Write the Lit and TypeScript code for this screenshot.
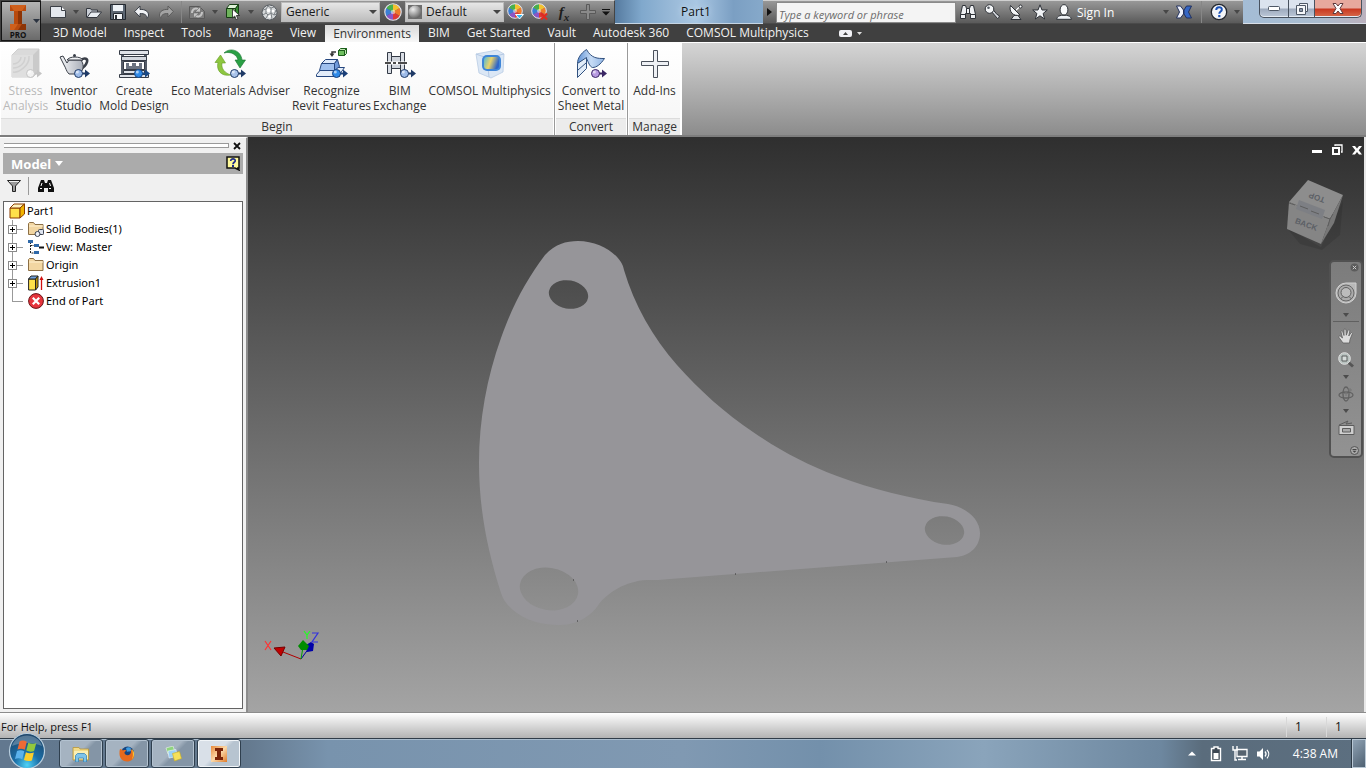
import { LitElement, html, css, TemplateResult } from "lit";
import { customElement } from "lit/decorators.js";
import { classMap } from "lit/directives/class-map.js";

type Icon = TemplateResult;

/* ---------- quick access icons (16 x 16) ---------- */
const newIcon = html`<svg width="16" height="16" viewBox="0 0 16 16"><path d="M.5 2.500h11l4 4v7h-15z" fill="#e4e8ee" stroke="#3b3f46"/><path d="M11.500 2.500v4h4" fill="#fff" stroke="#3b3f46"/></svg>`;
const openIcon = html`<svg width="16" height="16" viewBox="0 0 16 16"><path d="M.5 13.500v-9h4l1 1.500h6v3" fill="#c9ced6" stroke="#33373e"/><path d="M1 13.500l4-5.500h10.500l-4.500 5.500z" fill="#e9edf2" stroke="#33373e"/></svg>`;
const saveIcon = html`<svg width="16" height="16" viewBox="0 0 16 16"><path d="M.5.500h15v15h-15z" fill="#5c6672" stroke="#23282f"/><path d="M3 1h10v6H3z" fill="#eef2f6"/><path d="M3.500 9.500h9v6h-9z" fill="#f4f6f8" stroke="#23282f"/><path d="M5 11h2v4H5z" fill="#2a2f36"/></svg>`;
const undoIcon = html`<svg width="16" height="16" viewBox="0 0 16 16"><path d="M6 2v3.500c5-.5 8.500 2 8.500 5.500 0 1.500-.6 2.700-1.700 3.500.6-3-2-5.200-6.800-4.900V13L.7 7.500z" fill="#f1f3f6" stroke="#3a3f47"/></svg>`;
const redoIcon = html`<svg width="16" height="16" viewBox="0 0 16 16"><path d="M10 2v3.500c-5-.5-8.500 2-8.500 5.500 0 1.500.6 2.700 1.700 3.500-.6-3 2-5.200 6.800-4.900V13l5.300-5.500z" fill="#a3a3a3" stroke="#5c5c5c"/></svg>`;
const updateIcon = html`<svg width="16" height="16" viewBox="0 0 16 16"><path d="M.5 2.500h10l5 5v7H.5z" fill="#7d7d7d" stroke="#5a5a5a"/><path d="M3 9c0-4 4-6 7-3M13 8c0 4-4 6-7 3" fill="none" stroke="#c4c4c4" stroke-width="2"/><path d="M11.500 2.500V8H6zM4.500 14V9H10z" fill="#c4c4c4" stroke="#5a5a5a" stroke-width=".5"/></svg>`;
const pickIcon = html`<svg width="16" height="18" viewBox="0 0 16 18"><path d="M1.500 5.500h9v9h-9z" fill="#6eb35c" stroke="#173e14"/><path d="M1.500 5.500l3-4h9l-3 4z" fill="#dff3d8" stroke="#173e14"/><path d="M10.500 5.500l3-4v9l-3 4z" fill="#338a2e" stroke="#173e14"/><path d="M7.500 6v9l2.200-2 1.500 3.700 1.700-.8-1.500-3.400h3.200z" fill="#fff" stroke="#222" stroke-width=".8"/></svg>`;
const ballIcon = html`<svg width="17" height="17" viewBox="0 0 17 17"><circle cx="8.500" cy="8.500" r="7.500" fill="#d5d8da" stroke="#50555a"/><path d="M2 6l3-1 2-3 3 2 3-1M2 11l3-2 2 2 3-2 3 2 3-1M5 5l0 4M10 4l0 5M5 14l2-3M11 15l-1-6M13 11l2-5" fill="none" stroke="#7d8286" stroke-width="1"/><circle cx="7.500" cy="6.500" r="1.800" fill="#fff"/><circle cx="12" cy="7" r="1.300" fill="#fff"/><circle cx="8.500" cy="12.500" r="1.300" fill="#fff"/></svg>`;

const wheelPaths = html`<svg x="0" y="0" width="16" height="16" viewBox="0 0 16 16"><path d="M8 8V1a7 7 0 0 1 6 3.500z" fill="#f2c230"/><path d="M8 8l6-3.500a7 7 0 0 1 0 7z" fill="#ef7a2a"/><path d="M8 8l6 3.500A7 7 0 0 1 8 15z" fill="#de3a35"/><path d="M8 8v7a7 7 0 0 1-6-3.500z" fill="#8a56c7"/><path d="M8 8l-6 3.500a7 7 0 0 1 0-7z" fill="#3b7fd6"/><path d="M8 8L2 4.500A7 7 0 0 1 8 1z" fill="#49b04c"/><circle cx="8" cy="8" r="7.300" fill="none" stroke="#e6e6ee"/><circle cx="8" cy="8" r="2" fill="#fff" opacity=".5"/></svg>`;
const wheelIcon = html`<svg width="18" height="18" viewBox="0 0 16 16">${wheelPaths}</svg>`;
const wheelAdjustIcon = html`<svg width="18" height="18" viewBox="0 0 18 18">${wheelPaths}<path d="M8.500 11.500h8l-4 4.500z" fill="#38b6ee" stroke="#fff"/></svg>`;
const wheelClearIcon = html`<svg width="18" height="18" viewBox="0 0 18 18">${wheelPaths}<path d="M10 10.500l6 6M16 10.500l-6 6" stroke="#e02a20" stroke-width="2.200"/></svg>`;
const plusDim = html`<svg width="16" height="16" viewBox="0 0 16 16"><path d="M6.500.5h3v6h6v3h-6v6h-3v-6h-6v-3h6z" fill="#8a8a8a" stroke="#5a5a5a"/></svg>`;
const sphereIcon = html`<svg width="14" height="14" viewBox="0 0 14 14"><rect width="14" height="14" fill="#6e6e6e"/><circle cx="7" cy="7" r="6.500" fill="url(#sphere)"/></svg>`;
const caret = html`<svg width="6" height="4" viewBox="0 0 6 4"><path d="M0 0h6L3 4z" fill="currentColor"/></svg>`;
const comboCaret = html`<svg width="8" height="4" viewBox="0 0 8 4"><path d="M0 0h8L4 4z" fill="#444"/></svg>`;
const moreIcon = html`<svg width="8" height="8" viewBox="0 0 8 8"><path d="M0 1.500h8" stroke="#111"/><path d="M0 3.500h8L4 7.500z" fill="#111"/></svg>`;

/* ---------- info center icons ---------- */
const binocularsIcon = html`<svg width="16" height="16" viewBox="0 0 16 16"><path d="M2.500 1.500h3l1 3h3l1-3h3l2 9v4h-5v-5h-5v5h-5v-4z" fill="#eef0f3" stroke="#2e3238"/><path d="M6.500 4.500v5M9.500 4.500v5M.5 10.500h5M10.500 10.500h5" stroke="#2e3238"/></svg>`;
const keyIcon = html`<svg width="16" height="16" viewBox="0 0 16 16"><path d="M7 7l6.500 7.500 2-1.500-1-2-1.500-.5L9 5.500z" fill="#d9dce1" stroke="#2e3238"/><circle cx="5.500" cy="5" r="4.300" fill="#f3f5f7" stroke="#2e3238"/><circle cx="4.500" cy="3.800" r="1.300" fill="#555b63"/></svg>`;
const dishIcon = html`<svg width="16" height="16" viewBox="0 0 16 16"><path d="M7 6l6-5M3 15.500h10l-3-4H6z" fill="#dfe2e6" stroke="#2e3238"/><path d="M2.500 1.500c-2 6 3 11.500 9.500 9.500z" fill="#f3f5f7" stroke="#2e3238"/><path d="M8 6l4.500-4" stroke="#fff" stroke-width="1.500"/><circle cx="12.500" cy="2.500" r="1.500" fill="#fff" stroke="#2e3238"/></svg>`;
const starIcon = html`<svg width="16" height="16" viewBox="0 0 16 16"><path d="M8 .8l2 5.200h5.300l-4.200 3.500 1.500 5.500L8 11.800 3.400 15l1.500-5.500L.7 6H6z" fill="#f1f3f6" stroke="#2e3238"/></svg>`;
const userIcon = html`<svg width="16" height="16" viewBox="0 0 16 16"><path d="M.6 15.300c.3-2.800 2.800-3.600 5-4h4.800c2.200.4 4.700 1.200 5 4z" fill="#eef1f4" stroke="#2e3238"/><ellipse cx="8" cy="5.800" rx="3.900" ry="5.200" fill="#f8f9fa" stroke="#2e3238"/></svg>`;
const exchangeIcon = html`<svg width="16" height="14" viewBox="0 0 16 14"><path d="M.5 1h4l3 4v4l-3 4h-4l3-6z" fill="#eef1fb" stroke="#22305e"/><path d="M15.500 1h-5l-2.500 4v4l2.500 4h5l-3-6z" fill="#3566c4" stroke="#22305e"/></svg>`;
const helpIcon = html`<svg width="18" height="18" viewBox="0 0 18 18"><circle cx="9" cy="9" r="7.700" fill="#f3f5f8" stroke="#23272e" stroke-width="1.300"/><path d="M6.200 7c0-3.800 6-3.600 5.600-.2-.2 1.800-2.500 1.800-2.500 4" fill="none" stroke="#1c53b8" stroke-width="2"/><rect x="8.200" y="12" width="2.200" height="2.200" fill="#1c53b8"/></svg>`;

/* ---------- ribbon icons (32 x 32) ---------- */
const arrowBadge = (ball: string, shaft: string) =>
  html`<svg x="0" y="0" width="32" height="32" viewBox="0 0 32 32"><path d="M23 25.500h4" stroke="${shaft}" stroke-width="2"/><path d="M27 21.500l5 4-5 4z" fill="${shaft}"/><circle cx="20.500" cy="25.500" r="4" fill="${ball}" stroke="${shaft}"/><circle cx="19.300" cy="24" r="1.500" fill="#fff" opacity=".6"/></svg>`;
const stressIcon = html`<svg width="32" height="32" viewBox="0 0 32 32"><path d="M2 7l6-6h21v22l-6 6H2z" fill="#dadada" stroke="#cfcfcf"/><path d="M2 7h21v22H2z" fill="#dfdfdf"/><path d="M23 7l6-6v22l-6 6z" fill="#cacaca"/><path d="M3 24C8 25 20 18 19 8M3 20c7 0 12-5 12-11M3 16c4 0 8-3 8-7" fill="none" stroke="#d0d0d0" stroke-width="1.500"/>${arrowBadge("#f2f2f2", "#c4c4c4")}</svg>`;
const teapotIcon = html`<svg width="32" height="32" viewBox="0 0 32 32"><path d="M23 12c4-3 7-1 6 2s-4 6-7 7" fill="none" stroke="#3a3f48" stroke-width="2.500"/><path d="M2 9l3-1 4 7 2-3h12c4 6 2 11-2 14H11C8 23 8 20 6 17z" fill="url(#silver)" stroke="#3a3f48"/><path d="M9 12c2-4 14-4 16 0z" fill="#f2f3f5" stroke="#3a3f48"/><circle cx="16.500" cy="7.500" r="1.500" fill="#3a3f48"/>${arrowBadge("#9dbbe8", "#1f3a66")}</svg>`;
const moldIcon = html`<svg width="32" height="32" viewBox="0 0 32 32"><path d="M4.500 6v21M27.500 6v21" stroke="#555c68" stroke-width="3"/><path d="M1.500 2.500h29v4h-29z" fill="#dfe2e8" stroke="#363c47"/><path d="M3.500 8.500h25v4h-25z" fill="#d3d7de" stroke="#363c47"/><path d="M5.500 13.500h21v8h-21z" fill="#fff" stroke="#363c47"/><path d="M8 15h3v3h3v-3h4v3h3v-3h3v6H8z" fill="#6a7280"/><path d="M5.500 22.500h21v3h-21zM1.500 26.500h29v3h-29z" fill="#dfe2e8" stroke="#363c47"/>${arrowBadge("#2f8ae8", "#1b4a86")}</svg>`;
const ecoIcon = html`<svg width="32" height="32" viewBox="0 0 32 32"><path d="M10 5C16-1 27 2 28 12h3.500l-5.500 8-5-8h3C23 7 17 3 10 5z" fill="#2aa045" stroke="#17702e" stroke-width=".6"/><path d="M17 27C7 29 2 22 4 14.500H1L6.500 7l5 8H8c-1 6 3 10 9 12z" fill="#8dc63f" stroke="#639b22" stroke-width=".6"/>${arrowBadge("#a9c3ea", "#1f3a66")}</svg>`;
const recognizeIcon = html`<svg width="32" height="32" viewBox="0 0 32 32"><path d="M22.500 2.500h6v5h-6z" fill="#6fbf5f" stroke="#1b5e1a"/><path d="M22.500 2.500l2-2h6l-2 2zM28.500 7.500l2-2v-5l-2 2z" fill="#bfe6b3" stroke="#1b5e1a"/><path d="M20 4h-4v2" fill="none" stroke="#333" stroke-width="1.500"/><path d="M13.500 5.500h5l-2.500 3.500z" fill="#333"/><path d="M.5 26.500l6-7h22l-5 7v2h-23z" fill="#e4edf9" stroke="#26477f"/><path d="M5.500 15.500h13v7h-15z" fill="#9fc0ee" stroke="#26477f"/><path d="M5.500 15.500l4-4h12l-3 4z" fill="#dce9fb" stroke="#26477f"/><path d="M18.500 15.500l3-4 2 7-5 4z" fill="#6f9adb" stroke="#26477f"/>${arrowBadge("#2f8ae8", "#1b3f78")}</svg>`;
const bimIcon = html`<svg width="32" height="32" viewBox="0 0 32 32"><path d="M3.500 4.500h4v21h-4zM16.500 4.500h4v21h-4z" fill="#d9dde4" stroke="#333a46"/><path d="M7.500 8.500h9v12h-9z" fill="#cfd4dc" stroke="#333a46"/><path d="M1 15h22" stroke="#fff" stroke-width="3"/><path d="M1 15h6M9 15h3M14 15h9" stroke="#111" stroke-width="1.500"/>${arrowBadge("#9dbbe8", "#1f3a66")}</svg>`;
const comsolIcon = html`<svg width="32" height="32" viewBox="0 0 32 32"><path d="M2 6L23 2l7 4-1 18-12 6-12-5z" fill="#dbe7f5" stroke="#b9cbe3" stroke-width=".8"/><path d="M2 6l11 4 17-4M13 10l2 19" fill="none" stroke="#b5c9e4"/><rect x="8" y="7" width="19" height="16" rx="5" fill="#3f86d8"/><rect x="10" y="9" width="15" height="12" rx="3" fill="url(#heat)"/></svg>`;
const sheetIcon = html`<svg width="32" height="32" viewBox="0 0 32 32"><path d="M2.500 15.500c0-5 3-10 9-14 5 9 11 9 18 9-4 6-8 9-12 9-3-1-4-5-6-9z" fill="url(#sheet)" stroke="#31517f"/><path d="M2.500 15.500l9-6v11l-9 9z" fill="#e2edf9" stroke="#31517f"/><path d="M3 22l8-7" stroke="#31517f"/>${arrowBadge("#b79ae0", "#3a2764")}</svg>`;
const addIcon = html`<svg width="32" height="32" viewBox="0 0 32 32"><path d="M14.500 2.500h4v11h11v4h-11v12h-4v-12h-12v-4h12z" fill="#eef0f4" stroke="#4a505b"/></svg>`;

/* ---------- browser panel icons ---------- */
const partIcon = html`<svg width="16" height="16" viewBox="0 0 16 16"><path d="M1 5h10v10H1z" fill="#ffe14a" stroke="#8a3d00"/><path d="M1 5l4-4h10.500l-4.500 4z" fill="#fff4c0" stroke="#8a3d00"/><path d="M11 5l4.500-4v10L11 15z" fill="#f0b400" stroke="#8a3d00"/></svg>`;
const folder = html`<svg x="0" y="0" width="16" height="16" viewBox="0 0 16 16"><path d="M.5 13.500v-11l1-1h4l1.500 2h8v10z" fill="#f2d6a2" stroke="#8c6f45"/><path d="M1 5h14" stroke="#fff0cf"/></svg>`;
const folderIcon = html`<svg width="16" height="16" viewBox="0 0 16 16">${folder}</svg>`;
const bodiesIcon = html`<svg width="16" height="16" viewBox="0 0 16 16">${folder}<rect x="10.500" y="8.500" width="5" height="5" rx="1" fill="#dde3ee" stroke="#3b4252"/><circle cx="9.500" cy="13" r="2.500" fill="#eef1f6" stroke="#3b4252"/></svg>`;
const viewIcon = html`<svg width="16" height="16" viewBox="0 0 16 16"><path d="M2.500 3v11h4M2.500 6.500H7" fill="none" stroke="#222" stroke-dasharray="2 1"/><path d="M0 1h5v3H0zM6 5h5v3H6zM6 12h5v3H6z" fill="#2f69a9"/><path d="M11 8.500h5" stroke="#111" stroke-width="2"/></svg>`;
const extrudeIcon = html`<svg width="16" height="16" viewBox="0 0 16 16"><path d="M.6 4h7v11h-7z" fill="#ffe14a" stroke="#222"/><path d="M.6 4L3 1h7L7.600 4z" fill="#6fa2df" stroke="#222"/><path d="M7.600 4L10 1v11l-2.400 3z" fill="#c99a00" stroke="#222"/><path d="M13.500 15V3" stroke="#d01010" stroke-width="1.300"/><path d="M11.500 5l2-4 2 4z" fill="#d01010"/></svg>`;
const endIcon = html`<svg width="16" height="16" viewBox="0 0 16 16"><circle cx="8" cy="8" r="7.400" fill="#e5343c" stroke="#6b1216"/><path d="M4.800 4.800l6.400 6.400M11.200 4.800l-6.400 6.400" stroke="#fff" stroke-width="2.200"/></svg>`;
const filterIcon = html`<svg width="14" height="12" viewBox="0 0 14 12"><path d="M.5.500h13L8.500 6v5.500h-3V6z" fill="#9a9a9a" stroke="#222"/><path d="M2 1.500h10" stroke="#eee"/></svg>`;
const findIcon = html`<svg width="16" height="14" viewBox="0 0 16 14"><path d="M3 1h3l1 3h2l1-3h3l3 8v4h-6V9H6v4H0V9z" fill="#111"/><path d="M2 9.500h2M11 9.500h2M4 4l-1 3M11.500 4l1 3" stroke="#fff"/></svg>`;
const noteHelpIcon = html`<svg width="14" height="15" viewBox="0 0 14 15"><path d="M1 1h12v11h-1l1 2-4-2H1z" fill="#fffa9a" stroke="#111" stroke-width="1.500"/><path d="M4.700 5c0-3 4.800-2.700 4.500-.2C9 6.300 7 6.300 7 8.200" fill="none" stroke="#1d2a8a" stroke-width="1.700"/><rect x="6" y="9" width="2" height="2" fill="#1d2a8a"/></svg>`;
const crossIcon = html`<svg width="8" height="8" viewBox="0 0 8 8"><path d="M1 1l6 6M7 1L1 7" stroke="#111" stroke-width="1.800"/></svg>`;

/* ---------- window buttons ---------- */
const winMin = html`<svg width="12" height="5" viewBox="0 0 12 5"><rect x=".5" y=".5" width="11" height="4" rx="1" fill="#fff" stroke="#4e5866"/></svg>`;
const winMax = html`<svg width="12" height="12" viewBox="0 0 12 12"><path d="M3.500.5h8v8h-2v3h-9v-9h3z" fill="#f4f6f9" stroke="#4e5866"/><path d="M3.500 5.500h3v3h-3z" fill="#8895a8" stroke="#4e5866"/><path d="M9.500 8.500v-6h-6" fill="none" stroke="#4e5866"/></svg>`;
const winClose = html`<svg width="12" height="11" viewBox="0 0 12 11"><path d="M1 .5h3L6 3 8 .500h3L8 5.500l3 5H8L6 8l-2 2.500H1l3-5z" fill="#fff" stroke="#5e3a3c"/></svg>`;
const docMin = html`<svg width="12" height="12" viewBox="0 0 12 12"><path d="M1 7.500h10" stroke="#fff" stroke-width="3"/></svg>`;
const docMax = html`<svg width="12" height="12" viewBox="0 0 12 12"><path d="M4 2V1h7v7h-1" fill="none" stroke="#fff" stroke-width="1.300"/><path d="M2 4h6v6H2z" fill="none" stroke="#fff" stroke-width="2"/></svg>`;
const docClose = html`<svg width="12" height="12" viewBox="0 0 12 12"><path d="M1 2h3l2 2.500L8 2h3L7.700 6.200 11 10.500H8L6 8l-2 2.500H1l3.300-4.300z" fill="#fff"/></svg>`;

/* ---------- navigation bar icons ---------- */
const wheelNav = html`<svg width="22" height="22" viewBox="0 0 22 22"><path d="M11 1h10v10a10 10 0 1 1-10-10z" fill="#b9b9b9" stroke="#d0d0d0"/><circle cx="11" cy="11" r="8" fill="#ababab" stroke="#666"/><circle cx="11" cy="10.500" r="5" fill="#bcbcbc" stroke="#606060"/><path d="M8 14.500L5.500 17M14 14.500l2.500 2.500" stroke="#606060"/></svg>`;
const handNav = html`<svg width="16" height="16" viewBox="0 0 16 16"><path d="M5 15L1 9.500c-.8-1.300.8-2 1.700-1L4.500 10 3 4c-.3-1.500 1.300-1.700 1.700-.5L6 7.500V2c0-1.500 1.800-1.500 2 0l.3 5.200L10 2.500c.5-1.200 2-.8 1.800.5L10.800 8l2-3c.8-1 2-.3 1.500.8L12 11.500 11.500 15z" fill="#dcdcdc" stroke="#5e5e5e" stroke-width=".8"/></svg>`;
const zoomNav = html`<svg width="16" height="16" viewBox="0 0 16 16"><path d="M10.500 10.500l4.500 4" stroke="#555" stroke-width="3"/><circle cx="6.500" cy="6.500" r="5.800" fill="#b8c2bf" stroke="#e2e2e2"/><path d="M4 4h5v5H4z" fill="#d6dcda" stroke="#5a5f5e"/></svg>`;
const orbitNav = html`<svg width="16" height="16" viewBox="0 0 16 16"><ellipse cx="8" cy="8" rx="3" ry="7" fill="none" stroke="#616161" stroke-width="1.300"/><ellipse cx="8" cy="9" rx="7" ry="3" fill="none" stroke="#616161" stroke-width="1.300"/><path d="M8 5v5M5.500 7.500h5M12 2v4M10 4h4" stroke="#777"/></svg>`;
const lookNav = html`<svg width="17" height="16" viewBox="0 0 17 16"><path d="M1 5l9-4-2 3 6-1" fill="none" stroke="#5c5c5c"/><path d="M1 5.500h15v9H1z" fill="#cfcfcf" stroke="#5c5c5c"/><path d="M4.500 8.500h8v3.500h-8z" fill="#a8a8a8" stroke="#5c5c5c"/></svg>`;
const roundClose = html`<svg width="9" height="9" viewBox="0 0 9 9"><circle cx="4.500" cy="4.500" r="4" fill="#5c5c5c"/><path d="M2.800 2.800l3.400 3.400M6.200 2.800L2.800 6.200" stroke="#ccc"/></svg>`;
const roundMore = html`<svg width="9" height="9" viewBox="0 0 9 9"><circle cx="4.500" cy="4.500" r="4" fill="#aaa" stroke="#555"/><path d="M2.500 3.500h4" stroke="#444"/><path d="M2.500 4.800h4l-2 2z" fill="#444"/></svg>`;

/* ---------- taskbar icons ---------- */
const explorerIcon = html`<svg width="18" height="16" viewBox="0 0 18 16"><path d="M1 14V1.500h6l1 1.500h8.500v11z" fill="#f3dc88" stroke="#b79638" stroke-width=".8"/><path d="M2 5h14v8H2z" fill="#fbefb4"/><path d="M3.500 16V9.500l2-2h7l2 2V16h-3v-4h-5v4z" fill="#7fc4ea" stroke="#3a86b8" stroke-width=".8"/></svg>`;
const firefoxIcon = html`<svg width="16" height="16" viewBox="0 0 16 16"><circle cx="8.500" cy="7" r="6.500" fill="#16437e"/><path d="M7 2c4-2 6 1 5 3-2 1-3 0-4 1z" fill="#3c9be0"/><path d="M1 3c1 .5 2 .5 3 1.500 1.500-.8 3-.5 3.500.3-.7.5-2 .7-2 2 0 2.200 3.500 3.200 5.500 1.500 1.500-1.500 1-4 .5-5.300 2 .8 4 3.500 3.700 6.500C15 13 12 15.500 8 15.500S.5 12.500.5 8C.500 6 .500 4.500 1 3z" fill="#e66a1c"/><path d="M13 3c3 3 2.700 8-.5 10.500 1.500-2 2-5 .5-10.500z" fill="#f9c734"/></svg>`;
const notesIcon = html`<svg width="17" height="16" viewBox="0 0 17 16"><path d="M1 2l7-2 2 6-7 2z" fill="#8ed37f" stroke="#fff" stroke-width=".5"/><path d="M3 5l8-1.500 1 7-8 1.500z" fill="#9bd0f5" stroke="#fff" stroke-width=".5"/><path d="M7.500 7.500l7-2 2 7-7 2.500z" fill="#f6e05a" stroke="#c9ae20" stroke-width=".6"/></svg>`;
const inventorTask = html`<svg width="16" height="16" viewBox="0 0 16 16"><rect width="16" height="16" fill="url(#orange)"/><path d="M4 2h8v3h-2v6h2v3H4v-3h2V5H4z" fill="#7a2408"/></svg>`;
const batteryIcon = html`<svg width="12" height="16" viewBox="0 0 12 16"><path d="M4 1h4v1.500h2.500v12h-9v-12H4z" fill="#3d4853" stroke="#fff" stroke-width="1.400"/><path d="M3.500 7h5v6h-5z" fill="#fff"/></svg>`;
const networkIcon = html`<svg width="16" height="15" viewBox="0 0 16 15"><path d="M5 3.500h10v7H5z" fill="#56636f" stroke="#fff" stroke-width="1.300"/><path d="M10 11v2M6 13.500h8" stroke="#fff" stroke-width="1.500"/><path d="M1 0v4h4V0M3 4v10h2" fill="none" stroke="#fff" stroke-width="1.400"/></svg>`;
const soundIcon = html`<svg width="15" height="14" viewBox="0 0 15 14"><path d="M1 4.500h2.500L7 1v12L3.500 9.500H1z" fill="#fff"/><path d="M9 4.500c1.300 1.500 1.300 3.500 0 5M11 2.800c2.300 2.500 2.300 6 0 8.500" fill="none" stroke="#fff" stroke-width="1.200"/></svg>`;
const trayArrow = html`<svg width="8" height="5" viewBox="0 0 8 5"><path d="M0 4.500L4 .5l4 4z" fill="#fff"/></svg>`;
const orbIcon = html`<svg width="38" height="36" viewBox="0 0 38 36"><circle cx="19" cy="19" r="17.500" fill="url(#orb)" stroke="#b9cede" stroke-width="1.200"/><path d="M4 14C8 0 30 0 34 14c-9-4-21-4-30 0z" fill="#fff" opacity=".25"/><path d="M11.500 9.500c2.500-1.700 5-1.200 7.300.3l-2 8c-2.300-1.400-4.700-1.500-7.300-.3z" fill="#ee6b35"/><path d="M20.300 10.800c2.600 1.300 5 1.400 8 .2l-2.200 8c-2.600 1-5 .9-7.800-.4z" fill="#92c83e"/><path d="M9 19c2.300-1.200 4.800-1 7.300.3l-2 8c-2.300-1.300-4.800-1.400-7.300-.3z" fill="#5bb2ec"/><path d="M17.900 20.200c2.500 1.300 5 1.200 8 .2l-2 8c-2.800 1-5.300.7-8-.4z" fill="#fbce2c"/></svg>`;

const TABS = ["3D Model", "Inspect", "Tools", "Manage", "View", "Environments", "BIM", "Get Started", "Vault", "Autodesk 360", "COMSOL Multiphysics"];

interface Tool { lines: string[]; icon: Icon; off?: boolean }
const PANELS: { name: string; tools: Tool[] }[] = [
  {
    name: "Begin",
    tools: [
      { lines: ["Stress", "Analysis"], icon: stressIcon, off: true },
      { lines: ["Inventor", "Studio"], icon: teapotIcon },
      { lines: ["Create", "Mold Design"], icon: moldIcon },
      { lines: ["Eco Materials Adviser"], icon: ecoIcon },
      { lines: ["Recognize", "Revit Features"], icon: recognizeIcon },
      { lines: ["BIM", "Exchange"], icon: bimIcon },
      { lines: ["COMSOL Multiphysics"], icon: comsolIcon },
    ],
  },
  { name: "Convert", tools: [{ lines: ["Convert to", "Sheet Metal"], icon: sheetIcon }] },
  { name: "Manage", tools: [{ lines: ["Add-Ins"], icon: addIcon }] },
];

const NODES: { label: string; icon: Icon; leaf?: boolean }[] = [
  { label: "Solid Bodies(1)", icon: bodiesIcon },
  { label: "View: Master", icon: viewIcon },
  { label: "Origin", icon: folderIcon },
  { label: "Extrusion1", icon: extrudeIcon },
  { label: "End of Part", icon: endIcon, leaf: true },
];

@customElement("app-root")
export class AppRoot extends LitElement {
  static styles = css`
    :host {
      display: flex;
      flex-direction: column;
      height: 100vh;
      overflow: hidden;
      font: 12px/16px "Open Sans", "Noto Sans", sans-serif;
      color: #1e1e1e;
      background: #f0f0f0;
    }
    * { box-sizing: border-box; }
    button, input, select { font: inherit; color: inherit; margin: 0; padding: 0; border: 0; background: none; border-radius: 0; }
    svg { display: block; flex: none; }
    ul { list-style: none; margin: 0; padding: 0; }
    .defs { position: absolute; width: 0; height: 0; }

    header { display: grid; grid-template-columns: 41px 1fr; grid-template-rows: 24px 18px; background: #404040; flex: none; }
    .app { grid-row: 1 / 3; margin: 1px 0 1px 1px; border: 1px solid #151515; background: linear-gradient(#b4b4b4, #6a6a6a); display: flex; align-items: center; gap: 3px; padding-left: 4px; color: #222; }
    .logo { display: flex; flex-direction: column; align-items: center; width: 24px; font-size: 8px; line-height: 8px; font-weight: 700; color: #111; }

    .title { display: flex; background: linear-gradient(90deg, #6f97bb, #8fb2d4 60%, #a9bccd); min-width: 0; }
    .bar { display: flex; align-items: center; background: linear-gradient(#989898, #5a5a5a); border-top: 1px solid #d0d0d0; border-bottom: 1px solid #4a4a4a; flex: none; }
    .quick { padding-left: 5px; padding-right: 2px; border-right: 1px solid #444; }
    .slot { width: 24px; height: 22px; display: flex; align-items: center; justify-content: center; flex: none; }
    .drop { width: 12px; height: 22px; display: flex; align-items: center; justify-content: center; color: #474747; flex: none; }
    .rule { width: 1px; height: 22px; margin: 0 3px; background: #868686; flex: none; }
    .info .rule { margin: 0 5px; }
    .dark { background: linear-gradient(#6e6e6e, #4c4c4c); width: 25px; }
    .combo { display: flex; align-items: center; height: 20px; width: 99px; background: linear-gradient(#e6e6e6, #bdbdbd); padding: 0 2px; gap: 2px; color: #1b1b1b; border: 1px solid #bbb; flex: none; }
    .combo select { appearance: none; flex: 1; min-width: 0; height: 18px; padding-left: 2px; outline: 0; }
    .fx { font: italic 700 15px/18px "Liberation Serif", serif; color: #1c1c1c; }
    .fx sub { font-size: 11px; line-height: 8px; }
    .name { flex: 1; min-width: 60px; height: 24px; line-height: 23px; padding-left: 14px; text-align: center; border-bottom: 1px solid #c5d5e4; color: #111; font-weight: 400; font-size: 12px; margin: 0; text-shadow: 0 0 6px #d9e8f5; background: linear-gradient(90deg, #567ba0 0, #80a8cc 18%, #9bbbd9 40%, #a9c7e3 55%, #7b9fc3 80%, #86a9ca); }
    .search { width: 180px; height: 21px; background: #f4f4f4; border: 1px solid #8a8a8a; padding: 4px 2px 0; outline: 0; font-size: 11px; }
    .search::placeholder { font-style: italic; color: #6c6c6c; opacity: 1; }
    .arrow { width: 13px; height: 22px; display: flex; align-items: center; justify-content: center; }
    .sign { width: 84px; height: 22px; text-align: left; color: #fff; padding: 2px 0 0 1px; }
    .frame { width: 123px; display: flex; justify-content: flex-end; padding-right: 4px; background: linear-gradient(90deg, #a4bdd6, #a9bccf 60%, #bcb2be); flex: none; border-bottom: 1px solid #d9dfe8; }
    .win { height: 18px; display: flex; align-items: center; justify-content: center; background: linear-gradient(#dbe3ee 48%, #9daabd 52%, #bcc8d8); border: 1px solid #48525f; border-top: 0; width: 27px; box-shadow: inset 0 -1px #e4ebf3; margin-right: -1px; }
    .win:nth-child(1) { border-radius: 0 0 0 5px; width: 30px; }
    .win.close { width: 48px; margin: 0; border-radius: 0 0 5px 0; background: linear-gradient(#e7a99d 48%, #c8371f 52%, #d76a4b); }

    nav.tabs { display: flex; gap: 1px; padding-left: 4px; align-items: stretch; color: #f2f2f2; overflow: hidden; }
    .tab { padding: 0 8px; line-height: 16px; white-space: nowrap; }
    .tab.on { background: linear-gradient(#d9d9d9, #f8f8f8); color: #333; margin-top: 1px; }
    .fold { display: flex; align-items: center; gap: 5px; margin-left: 21px; color: #e4e4ea; }

    .ribbon { display: flex; height: 95px; flex: none; border-top: 1px solid #fff; border-bottom: 2px solid #7d7d7d; background: linear-gradient(#d5d5d5, #8c8c8c); }
    .panel { display: flex; flex-direction: column; background: #fff; border-right: 1px solid #9a9a9a; padding: 0 1px; }
    .panel:last-child { border-color: #fff; }
    .tools { display: flex; flex: 1; gap: 2px; padding: 5px 2px 0; justify-content: center; background: linear-gradient(#fff, #f7f7f7); }
    .tool { display: flex; flex-direction: column; align-items: center; justify-content: flex-start; line-height: 15px; gap: 3px; color: #333; white-space: nowrap; }
    .tool[disabled] { color: #b9b9b9; }
    .caption { margin: 0; font: inherit; height: 17px; line-height: 16px; padding: 0 3px; text-align: center; background: #ececec; color: #333; border-top: 1px solid #dcdcdc; }

    main { display: flex; flex: 1; min-height: 0; }
    aside { width: 248px; flex: none; display: flex; flex-direction: column; padding: 2px 5px 3px 3px; border-top: 1px solid #fff; border-right: 2px solid #8c8c8c; background: #f0f0f0; font: 11px/18px "Noto Sans", sans-serif; color: #000; }
    .gripbar { display: flex; align-items: center; height: 11px; gap: 4px; }
    .grip { flex: 1; height: 5px; border: 1px solid #9a9a9a; border-width: 1px 1px 1px 0; background: #fff; margin-left: 1px; }
    .head { display: flex; align-items: center; justify-content: space-between; height: 21px; margin-top: 2px; padding: 0 3px 0 8px; background: #ababab; width: 240px; }
    .head button { display: flex; align-items: center; gap: 4px; color: #fff; font: 700 13px/20px "Noto Sans", sans-serif; }
    .minitools { display: flex; align-items: center; height: 24px; margin-bottom: 3px; padding-left: 4px; }
    .minirule { width: 1px; height: 18px; background: #9a9a9a; margin: 0 9px 0 7px; }
    .tree { flex: 1; width: 240px; border: 1px solid #646464; background: #fff; min-height: 0; overflow: hidden; }
    .root { display: flex; align-items: center; gap: 2px; height: 18px; padding-left: 5px; }
    .node { display: grid; grid-template-columns: 9px 6px 16px 1fr; align-items: center; height: 18px; padding-left: 4px; }
    .node svg { margin-left: 5px; }
    .node .txt { padding-left: 7px; }
    .stem { height: 18px; width: 9px; background: linear-gradient(#999, #999) 4px 0 / 1px 100% no-repeat; display: flex; align-items: center; }
    .leaf .stem { background-size: 1px 9px; }
    .twig { height: 1px; background: #999; }
    .leaf .twig { margin-left: -5px; }
    .plus { width: 9px; height: 9px; border: 1px solid #8a8a8a; background: linear-gradient(#000, #000) 1px 3px / 5px 1px no-repeat, linear-gradient(#000, #000) 3px 1px / 1px 5px no-repeat, #fff; }

    .view { flex: 1; min-width: 0; position: relative; background: linear-gradient(#2f2f2f, #a4a4a4); border-right: 2px solid #e8e8e8; overflow: hidden; }
    .scene { width: 100%; height: 100%; }
    .doc { position: absolute; top: 7px; right: 1px; display: flex; gap: 8px; }
    .cube { position: absolute; top: 37px; right: 14px; }
    .navbar { position: absolute; top: 123px; right: 1px; width: 34px; height: 198px; border: 2px solid #515151; border-radius: 5px; background: linear-gradient(#7c7c7c, #929292); display: flex; flex-direction: column; align-items: center; }
    .navbar button { display: flex; align-items: center; justify-content: center; flex: none; color: #4c4c4c; }
    .navbar .nv { height: 24px; }
    .navbar .nw { height: 38px; padding-top: 4px; }
    .navbar .nd { height: 10px; }
    .navbar .nc { align-self: flex-end; height: 10px; padding-right: 2px; }
    .nr { width: 26px; height: 1px; background: #606060; margin: 1px 0 2px; flex: none; }
    .navbar .last { margin-top: auto; margin-bottom: 1px; }

    .status { display: flex; align-items: center; height: 26px; flex: none; border-top: 1px solid #8c8c8c; background: linear-gradient(#fff, #b3b3b3); padding: 2px 0 0 1px; color: #111; font-size: 11px; }
    .status output { border-left: 1px solid #d8d8d8; height: 20px; line-height: 20px; width: 40px; padding-left: 8px; font-size: 12px; }
    .status span { flex: 1; }

    footer { display: flex; align-items: stretch; height: 30px; flex: none; border-top: 1px solid #303c48; box-shadow: inset 0 1px #a9bccd; background: linear-gradient(90deg, #62788f 0, #64798e 18%, #7893ad 24%, #8099b2 50%, #7390ab 60%, #8aa4bb 72%, #6d879f 85%, #5a6c7c 88%, #5c6f80 100%); color: #fff; }
    .start { width: 54px; height: 36px; margin-top: -7px; display: flex; justify-content: center; align-items: flex-start; position: relative; }
    .apps { display: flex; gap: 2px; flex: 1; padding-left: 5px; }
    .task { width: 44px; border: 1px solid #2f3f4e; border-radius: 3px; box-shadow: inset 0 0 0 1px #b3c2d0; background: linear-gradient(135deg, #a5b3c1 45%, #8495a6 55%); display: flex; align-items: center; justify-content: center; }
    .task.on { background: linear-gradient(135deg, #d9e0e8 45%, #b7c4d0 55%); box-shadow: inset 0 0 0 1px #f1f5f8; }
    .tray { display: flex; align-items: center; }
    .clock { padding: 0 14px 0 17px; line-height: 29px; }
    .desk { width: 14px; border: 1px solid #b9c8d5; background: linear-gradient(135deg, #8fa2b4, #4f6172); box-shadow: -1px 0 #2e3b47; }
  `;

  private drop(label: string) {
    return html`<button class="drop" aria-label=${label}>${caret}</button>`;
  }

  private slotButton(label: string, icon: Icon, extra = "") {
    return html`<button class="slot ${extra}" aria-label=${label}>${icon}</button>`;
  }

  private renderHeader() {
    return html`<header>
      <button class="app" aria-label="Application menu">
        <span class="logo"><svg width="18" height="27" viewBox="0 0 18 27"><path d="M1 1h16v6h-4v13h4v6H1v-6h4V7H1z" fill="#b84a0e"/><path d="M1 1h16l-4 6H5z" fill="#cf5f1b"/><path d="M1 20h4l4 0-4 6H1z" fill="#cf5f1b"/><path d="M9 7h4v13H9zM13 20h4v6H9z" fill="#8c3406"/></svg>PRO</span>
        <svg width="7" height="4" viewBox="0 0 7 4"><path d="M0 0h7L3.500 4z" fill="#2b3340"/></svg>
      </button>
      <div class="title">
        <div class="bar quick">
          ${this.slotButton("New", newIcon)}${this.drop("New options")}
          ${this.slotButton("Open", openIcon)}${this.slotButton("Save", saveIcon)}${this.slotButton("Undo", undoIcon)}${this.slotButton("Redo", redoIcon)}
          <span class="rule"></span>
          ${this.slotButton("Update", updateIcon)}${this.drop("Update options")}
          ${this.slotButton("Select", pickIcon)}${this.drop("Select options")}
          ${this.slotButton("Material", ballIcon)}
          <span class="combo"><select aria-label="Material"><option>Generic</option></select>${comboCaret}</span>
          ${this.slotButton("Appearance", wheelIcon, "dark")}
          <span class="combo">${sphereIcon}<select aria-label="Appearance"><option>Default</option></select>${comboCaret}</span>
          ${this.slotButton("Adjust", wheelAdjustIcon)}${this.slotButton("Clear", wheelClearIcon)}
          <button class="slot fx" aria-label="Parameters"><span>f<sub>x</sub></span></button>
          ${this.slotButton("Add", plusDim)}
          <button class="drop" aria-label="Customize">${moreIcon}</button>
        </div>
        <h1 class="name">Part1</h1>
        <div class="bar info">
          <button class="arrow" aria-label="Collapse search"><svg width="5" height="8" viewBox="0 0 5 8"><path d="M0 0l5 4-5 4z" fill="#111"/></svg></button>
          <input class="search" type="text" aria-label="Search help" placeholder="Type a keyword or phrase" />
          ${this.slotButton("Search", binocularsIcon)}${this.slotButton("Subscription", keyIcon)}${this.slotButton("Communication", dishIcon)}${this.slotButton("Favorites", starIcon)}${this.slotButton("Account", userIcon)}
          <button class="sign">Sign In</button>${this.drop("Account options")}
          ${this.slotButton("Exchange Apps", exchangeIcon)}
          <span class="rule"></span>
          ${this.slotButton("Help", helpIcon)}${this.drop("Help options")}
        </div>
        <div class="frame">
          <button class="win" aria-label="Minimize">${winMin}</button>
          <button class="win" aria-label="Restore">${winMax}</button>
          <button class="win close" aria-label="Close">${winClose}</button>
        </div>
      </div>
      <nav class="tabs">
        ${TABS.map((t) => html`<button class=${classMap({ tab: true, on: t === "Environments" })}>${t}</button>`)}
        <button class="fold" aria-label="Minimize ribbon"><svg width="13" height="7" viewBox="0 0 13 7"><rect width="13" height="7" rx="2" fill="#f2f2f6"/><path d="M4 5h5L6.500 2z" fill="#444"/></svg><svg width="5" height="3" viewBox="0 0 5 3"><path d="M0 0h5L2.500 3z" fill="#ddd"/></svg></button>
      </nav>
    </header>`;
  }

  private renderRibbon() {
    return html`<div class="ribbon">
      ${PANELS.map(
        (p) => html`<section class="panel">
          <div class="tools">
            ${p.tools.map((t) => html`<button class="tool" ?disabled=${!!t.off}>${t.icon}<span>${t.lines.map((l, i) => (i ? html`<br />${l}` : l))}</span></button>`)}
          </div>
          <h2 class="caption">${p.name}</h2>
        </section>`
      )}
    </div>`;
  }

  private renderBrowser() {
    return html`<aside>
      <div class="gripbar"><span class="grip"></span><button aria-label="Close panel">${crossIcon}</button></div>
      <div class="head">
        <button>Model<svg width="8" height="5" viewBox="0 0 8 5"><path d="M0 0h8L4 5z" fill="#fff"/></svg></button>
        <button aria-label="Panel help">${noteHelpIcon}</button>
      </div>
      <div class="minitools">
        <button aria-label="Filter">${filterIcon}</button><span class="minirule"></span><button aria-label="Find">${findIcon}</button>
      </div>
      <div class="tree">
        <div class="root">${partIcon}<span>Part1</span></div>
        <ul>
          ${NODES.map(
            (n) => html`<li class=${classMap({ node: true, leaf: !!n.leaf })}>
              <span class="stem">${n.leaf ? "" : html`<button class="plus" aria-label="Expand ${n.label}"></button>`}</span>
              <span class="twig"></span>${n.icon}<span class="txt">${n.label}</span>
            </li>`
          )}
        </ul>
      </div>
    </aside>`;
  }

  private renderView() {
    return html`<div class="view">
      <svg class="scene" viewBox="248 137 1116 575" preserveAspectRatio="xMinYMin meet" role="img" aria-label="Part1 model">
        <path fill="#969599" fill-rule="evenodd" d="M545 255C555 244 566 241 578 241C601 241 622 256 624 270C634 304 653 338 677 365C700 391 725 413 753 432C779 450 807 465 837 476C872 489 911 499 948 504C966 507 980 519 980 533C980 546 971 555 957 557L670 579C662 580 655 580 647 580C625 581 608 593 599 604C591 617 575 626 557 625C529 625 506 610 501 593C487 549 479 508 479 463C479 420 487 377 501 338C513 304 527 279 545 255zM549 291A19.600 14 10 1 1 588 298A19.600 14 10 1 1 549 291zM925 527A19.600 14 10 1 1 964 534A19.600 14 10 1 1 925 527zM520 584A29.300 21 10 1 1 578 594A29.300 21 10 1 1 520 584z"/>
        <path d="M573 580h1M577 621h1M735 574h1M886 562h1" stroke="#333"/>
        <path d="M301 659l-18-7" stroke="#b00000"/><path d="M274 648l11-1 -4 9z" fill="#c00000" stroke="#700"/>
        <path d="M301 659l8-11" stroke="#0000a0"/><path d="M306 645l5-3 3 2-1 7-6 1z" fill="#0000a8"/>
        <path d="M301 659l2-12" stroke="#00a000"/><path d="M298 646l5-6 6 6-2 4h-6z" fill="#008c00"/>
        <path d="M265 641l6 9M271 641l-6 9" stroke="#f33" stroke-width="1.200"/>
        <path d="M304 631l3 4 3-4M307 635v4" stroke="#2f2" stroke-width="1.200" fill="none"/>
        <path d="M312 633h6l-6 9h6" stroke="#33d" stroke-width="1.200" fill="none"/>
      </svg>
      <div class="doc">
        <button aria-label="Minimize document">${docMin}</button><button aria-label="Restore document">${docMax}</button><button aria-label="Close document">${docClose}</button>
      </div>
      <svg class="cube" width="72" height="78" viewBox="1278 174 72 78">
        <path d="M1287 228l34 19 22-46-3 34-18 15-22-6z" fill="#000" opacity=".1"/>
        <path d="M1308 180l35 15-13 24-41-17z" fill="#8d8d8d"/>
        <path d="M1289 202l41 17-9 25-34-15z" fill="#858585"/>
        <path d="M1343 195l-9 28-13 21 9-25z" fill="#777"/>
        <path d="M1299 200l26 10-3 9-26-10z" fill="#7d7f84"/>
        <path d="M1289 203l6 2M1300 206l8 3M1311 211l8 3M1324 217l6 2 3-5M1330 219l-2 7" stroke="#5e5e5e" fill="none"/>
        <text x="1317" y="197" transform="rotate(200 1317 197)" text-anchor="middle" dominant-baseline="middle" font-size="8" font-weight="700" fill="#5c6066" font-family="Liberation Sans">TOP</text>
        <text x="1306" y="225" transform="rotate(20 1306 225)" text-anchor="middle" dominant-baseline="middle" font-size="8" font-weight="700" fill="#5c6066" font-family="Liberation Sans">BACK</text>
      </svg>
      <div class="navbar">
        <button class="nc" aria-label="Close navigation bar">${roundClose}</button>
        <button class="nw" aria-label="Steering wheel">${wheelNav}</button>
        <button class="nd" aria-label="Wheel options">${caret}</button>
        <span class="nr"></span>
        <button class="nv" aria-label="Pan">${handNav}</button>
        <button class="nv" aria-label="Zoom">${zoomNav}</button>
        <button class="nd" aria-label="Zoom options">${caret}</button>
        <button class="nv" aria-label="Orbit">${orbitNav}</button>
        <button class="nd" aria-label="Orbit options">${caret}</button>
        <button class="nv" aria-label="Look at">${lookNav}</button>
        <button class="nc last" aria-label="Customize navigation bar">${roundMore}</button>
      </div>
    </div>`;
  }

  private renderTaskbar() {
    return html`<footer>
      <button class="start" aria-label="Start">${orbIcon}</button>
      <div class="apps">
        <button class="task" aria-label="Explorer">${explorerIcon}</button>
        <button class="task" aria-label="Firefox">${firefoxIcon}</button>
        <button class="task" aria-label="Sticky Notes">${notesIcon}</button>
        <button class="task on" aria-label="Inventor">${inventorTask}</button>
      </div>
      <div class="tray">
        ${this.slotButton("Show hidden icons", trayArrow)}${this.slotButton("Battery", batteryIcon)}${this.slotButton("Network", networkIcon)}${this.slotButton("Volume", soundIcon)}
        <time class="clock">4:38 AM</time>
      </div>
      <button class="desk" aria-label="Show desktop"></button>
    </footer>`;
  }

  render() {
    return html`
      <svg class="defs" aria-hidden="true">
        <defs>
          <radialGradient id="sphere" cx=".35" cy=".3" r=".8"><stop offset="0" stop-color="#eee"/><stop offset="1" stop-color="#555"/></radialGradient>
          <linearGradient id="silver"><stop offset="0" stop-color="#f5f6f8"/><stop offset="1" stop-color="#a9aeb8"/></linearGradient>
          <linearGradient id="heat" x2="1" y2=".3"><stop offset="0" stop-color="#54b9d6"/><stop offset=".5" stop-color="#e9d36a"/><stop offset="1" stop-color="#2f66c9"/></linearGradient>
          <linearGradient id="sheet"><stop offset="0" stop-color="#5f92d6"/><stop offset=".5" stop-color="#c7dcf5"/><stop offset="1" stop-color="#8fb4e4"/></linearGradient>
          <linearGradient id="orange" x2="1" y2="1"><stop offset="0" stop-color="#e8893a"/><stop offset=".5" stop-color="#fbd8a8"/><stop offset="1" stop-color="#e07a28"/></linearGradient>
          <radialGradient id="orb" cx=".5" cy=".9" r=".9"><stop offset="0" stop-color="#4fd3f7"/><stop offset=".4" stop-color="#1b6fa8"/><stop offset="1" stop-color="#1d4468"/></radialGradient>
        </defs>
      </svg>
      ${this.renderHeader()} ${this.renderRibbon()}
      <main>${this.renderBrowser()} ${this.renderView()}</main>
      <div class="status"><span>For Help, press F1</span><output>1</output><output>1</output></div>
      ${this.renderTaskbar()}
    `;
  }
}
